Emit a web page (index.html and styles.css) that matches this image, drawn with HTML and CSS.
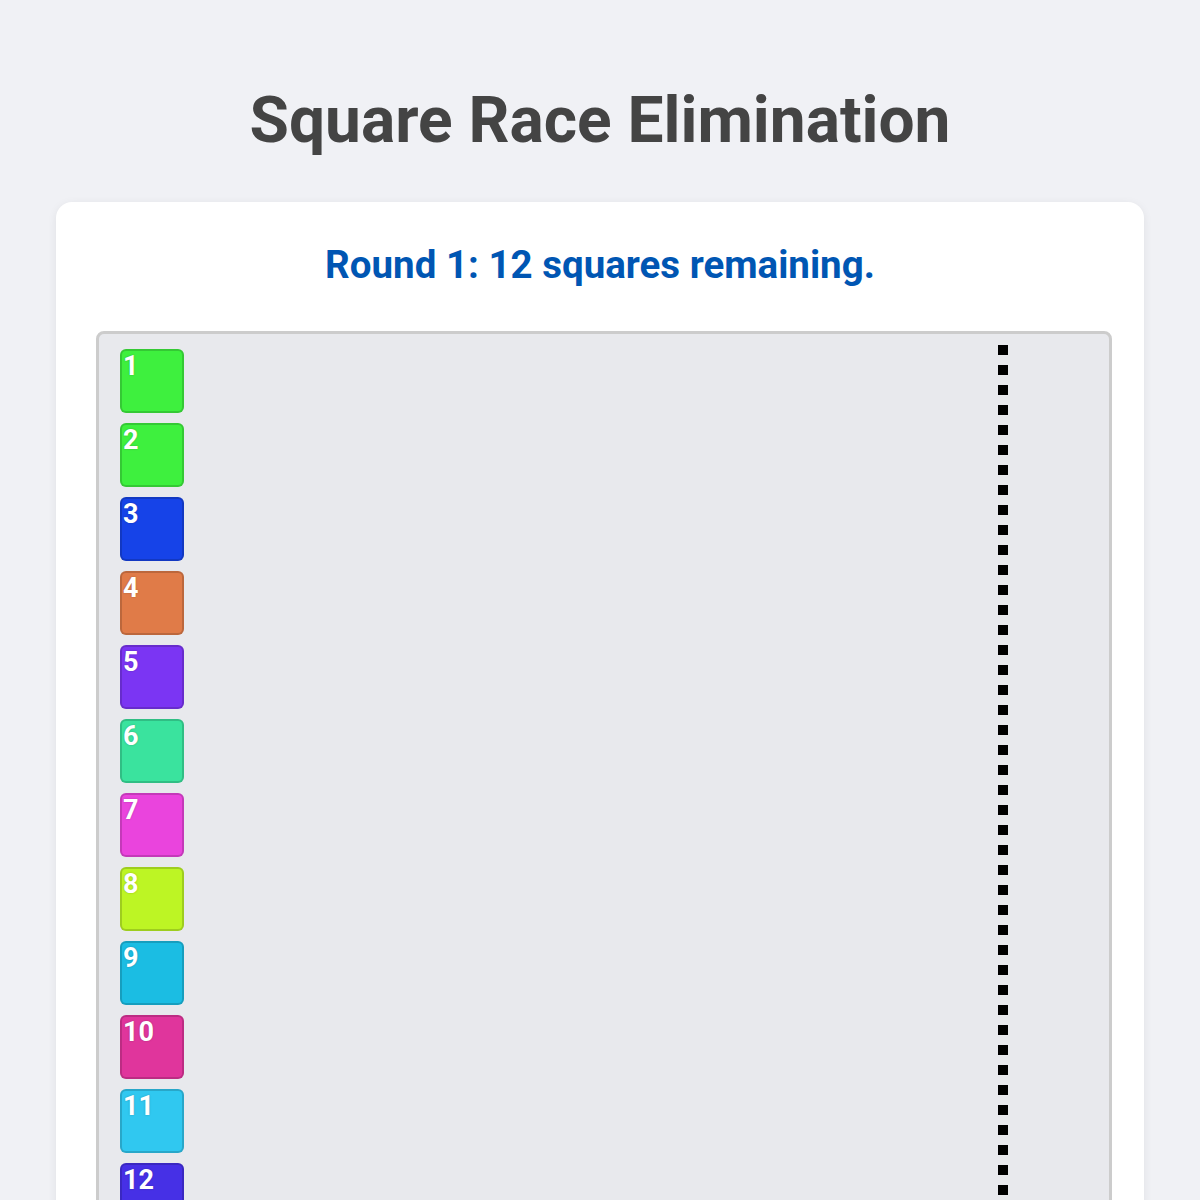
FILE: index.html
```html
<!DOCTYPE html>
<html lang="en">
<head>
    <meta charset="UTF-8">
    <title>Square Race Elimination</title>
    <link rel="stylesheet" href="styles.css">
</head>
<body>
    <h1 class="title">Square Race Elimination</h1>
    <div class="card">
        <p class="status">Round 1: 12 squares remaining.</p>
        <div class="track">
            <div class="finish"></div>
            <div class="racer c1">1</div>
            <div class="racer c2">2</div>
            <div class="racer c3">3</div>
            <div class="racer c4">4</div>
            <div class="racer c5">5</div>
            <div class="racer c6">6</div>
            <div class="racer c7">7</div>
            <div class="racer c8">8</div>
            <div class="racer c9">9</div>
            <div class="racer c10">10</div>
            <div class="racer c11">11</div>
            <div class="racer c12">12</div>
        </div>
    </div>
</body>
</html>
```

FILE: styles.css
```css
*{
    margin: 0;
    padding: 0;
    box-sizing: border-box;
}
body{
    background: #f0f1f5;
    font-family: Roboto, "Liberation Sans", sans-serif;
    padding: 0 56px 40px;
}
.title{
    margin: 83px 0 44px;
    text-align: center;
    font-size: 64px;
    font-weight: 700;
    color: #444;
}
.card{
    background: #fff;
    border-radius: 16px;
    padding: 40px;
    box-shadow: 0 2px 10px rgba(0, 0, 0, 0.07);
}
.status{
    text-align: center;
    font-size: 38.5px;
    font-weight: 700;
    color: #0056b3;
    margin-bottom: 44px;
}
.track{
    position: relative;
    margin-right: -8px;
    background: #e8e9ed;
    border: 3px solid #ccc;
    border-radius: 8px;
    padding: 15px 21px;
    display: flex;
    flex-direction: column;
    gap: 10px;
}
.finish{
    position: absolute;
    top: 11px;
    bottom: 10px;
    right: 101px;
    width: 10px;
    background: repeating-linear-gradient(to bottom, #000 0 10px, transparent 10px 20px);
}
.racer{
    width: 64px;
    height: 64px;
    border: 2px solid rgba(0, 0, 0, 0.16);
    border-radius: 6px;
    padding-left: 1px;
    color: #fff;
    font-size: 27px;
    font-weight: 700;
    line-height: 31px;
    text-shadow: 0 0 2px rgba(0, 0, 0, 0.25);
}
.c1, .c2{ background: #3ef03e; }
.c3{ background: #1643e8; }
.c4{ background: #e07b48; }
.c5{ background: #7b35f3; }
.c6{ background: #3ae39e; }
.c7{ background: #ea44dd; }
.c8{ background: #bdf524; }
.c9{ background: #1bbde3; }
.c10{ background: #e0359c; }
.c11{ background: #30c8f0; }
.c12{ background: #4630e6; }
```
